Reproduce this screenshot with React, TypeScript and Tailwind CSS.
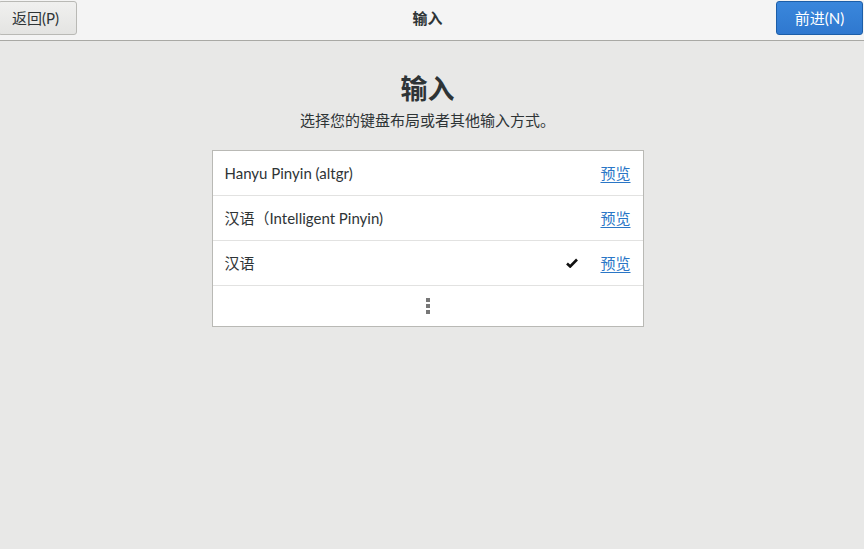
import React from "react";

const font = { fontFamily: 'Lato, "Noto Sans CJK SC", sans-serif' };

function Check() {
  return (
    <svg width="12" height="10" viewBox="0 0 12 10" className="mr-[22px]">
      <path d="M1 5.5 L4.2 8.5 L11 1.5" fill="none" stroke="#111" strokeWidth="2.6" strokeLinecap="butt" />
    </svg>
  );
}

function Row({ label, checked, last }: { label: string; checked?: boolean; last?: boolean }) {
  return (
    <div className={`flex h-[45px] items-center pl-[12px] pr-[12px] ${last ? "" : "border-b border-[#e2e2e1]"}`}>
      <span className="flex-1 text-[15px] text-[#2e3436]">{label}</span>
      {checked && <Check />}
      <span className="text-[15px] text-[#2a76c6] underline underline-offset-[3px]">预览</span>
    </div>
  );
}

export default function App() {
  return (
    <div className="flex h-[549px] w-[864px] flex-col bg-[#e8e8e7]" style={font}>
      <div className="relative flex h-[41px] items-start justify-between border-b border-[#a9a9a5] bg-[#f4f4f4]">
        <button className="ml-[-2px] mt-[1px] flex h-[34px] w-[79px] items-center justify-center rounded-[3px] border border-[#b9b9b5] bg-gradient-to-b from-[#f0f0ef] to-[#e4e4e2] pr-[4px] text-[15px] text-[#2e3436]">
          返回(P)
        </button>
        <div className="absolute left-0 right-[9px] top-[7px] text-center text-[15px] font-bold text-[#2e3436]">输入</div>
        <button className="mr-[1px] mt-[1px] flex h-[34px] w-[87px] items-center justify-center rounded-[3px] border border-[#1c5ea8] bg-gradient-to-b from-[#3a87dc] to-[#2f78cf] text-[15px] text-white">
          前进(N)
        </button>
      </div>
      <div className="flex flex-col items-center pr-[9px]">
        <div className="mt-[30px] text-[27px] font-bold leading-[36px] text-[#2e3436]">输入</div>
        <div className="mt-[3px] text-[15px] leading-[20px] text-[#2e3436]">选择您的键盘布局或者其他输入方式。</div>
        <div className="mt-[20px] w-[432px] border border-[#b9b9b5] bg-white">
          <Row label="Hanyu Pinyin (altgr)" />
          <Row label="汉语（Intelligent Pinyin)" />
          <Row label="汉语" checked />
          <div className="flex h-[40px] flex-col items-center justify-center gap-[2px]">
            <span className="h-[4px] w-[4px] bg-[#777]" />
            <span className="h-[4px] w-[4px] bg-[#777]" />
            <span className="h-[4px] w-[4px] bg-[#777]" />
          </div>
        </div>
      </div>
    </div>
  );
}
